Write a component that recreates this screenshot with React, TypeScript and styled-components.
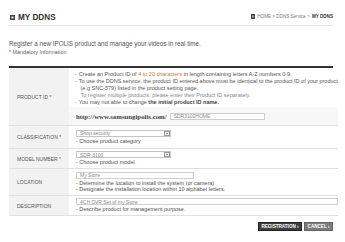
import React from "react";
import styled, { createGlobalStyle } from "styled-components";

const GlobalStyle = createGlobalStyle`
  html, body {
    margin: 0;
    padding: 0;
    background: #ffffff;
  }
  body {
    font-family: "Liberation Sans", Arial, sans-serif;
    color: #555;
  }
`;

const Page = styled.div`
  width: 345px;
  height: 242px;
  box-sizing: border-box;
  padding: 8px 12px 0 9px;
  overflow: hidden;
`;

const Header = styled.div`
  display: flex;
  justify-content: space-between;
  align-items: center;
  height: 17px;
  border-bottom: 1px solid #e6e6e6;
`;

const Title = styled.h1`
  display: flex;
  align-items: center;
  gap: 3px;
  margin: 0 0 0 1px;
  padding-top: 2px;
  font-size: 8.2px;
  font-weight: 700;
  color: #333;
`;

const SquareIcon = styled.span<{ $size: number }>`
  display: inline-block;
  box-sizing: border-box;
  width: ${({ $size }) => $size}px;
  height: ${({ $size }) => $size}px;
  background: #fff;
  border: ${({ $size }) => ($size > 4.6 ? 1.5 : 1)}px solid #444;
  box-shadow: inset 0 0 0 0.5px #444;
`;

const Crumbs = styled.div`
  display: flex;
  align-items: center;
  gap: 2px;
  font-size: 4.6px;
  color: #777;

  b {
    color: #333;
  }
`;

const Intro = styled.div`
  margin-top: 13px;
`;

const Lead = styled.p`
  margin: 0;
  font-size: 6.3px;
  line-height: 9px;
  color: #555;
`;

const Mandatory = styled.p`
  margin: 0;
  font-size: 5.4px;
  line-height: 8px;
  color: #666;
`;

const Table = styled.div`
  margin-top: 10px;
  border-top: 2px solid #333;
  display: grid;
  grid-template-columns: 60px 1fr;
`;

const Label = styled.div<{ $h: number }>`
  height: ${({ $h }) => $h}px;
  box-sizing: border-box;
  display: flex;
  align-items: center;
  padding-left: 8px;
  background: #f2f2f2;
  border-bottom: 1px solid #e0e0e0;
  font-size: 5px;
  color: #555;
`;

const Cell = styled.div<{ $h: number }>`
  height: ${({ $h }) => $h}px;
  box-sizing: border-box;
  display: flex;
  flex-direction: column;
  justify-content: center;
  gap: 1px;
  padding-left: 7px;
  border-bottom: 1px solid #e0e0e0;
`;

const ProductCell = styled.div`
  height: 58px;
  box-sizing: border-box;
  display: flex;
  flex-direction: column;
  border-bottom: 1px solid #e0e0e0;
`;

const Notes = styled.ul`
  margin: 0;
  padding: 3px 0 0 6px;
  list-style: none;
  font-size: 5.5px;
  line-height: 6.9px;
  color: #555;
  flex: 1;
`;

const Note = styled.li<{ $plain?: boolean; $muted?: boolean }>`
  white-space: nowrap;
  color: ${({ $muted }) => ($muted ? "#7a8794" : "#555")};
  padding-left: ${({ $plain }) => ($plain ? 3.5 : 0)}px;

  &::before {
    content: "${({ $plain }) => ($plain ? "" : "·")}";
    color: #e07a3a;
    font-weight: 700;
    margin-right: 2px;
  }

  em {
    font-style: normal;
    color: #d2783c;
  }

  b {
    color: #444;
  }
`;

const UrlRow = styled.div`
  height: 18px;
  display: flex;
  align-items: center;
  gap: 3px;
  padding-left: 7px;
  background: #f7f7f7;
`;

const Url = styled.span`
  font-family: "Liberation Serif", "Times New Roman", serif;
  font-weight: 700;
  font-size: 6.8px;
  color: #444;
`;

const TextBox = styled.div<{ $w?: number }>`
  box-sizing: border-box;
  height: 7px;
  width: ${({ $w }) => ($w ? `${$w}px` : "100%")};
  border: 1px solid #cfcfcf;
  background: #fff;
  display: flex;
  align-items: center;
  padding-left: 3px;
  font-size: 5px;
  color: #888;
`;

const SelectBox = styled.div`
  box-sizing: border-box;
  height: 7px;
  width: 95px;
  border: 1px solid #c4c4c4;
  background: #fff;
  display: flex;
  align-items: center;
  justify-content: space-between;
  padding-left: 3px;
  font-size: 5px;
  color: #888;
`;

const Arrow = styled.span`
  box-sizing: border-box;
  width: 6px;
  height: 5px;
  margin-right: 0.5px;
  border: 0.5px solid #999;
  background: #eee;
  display: flex;
  align-items: center;
  justify-content: center;

  &::after {
    content: "";
    border-left: 1.2px solid transparent;
    border-right: 1.2px solid transparent;
    border-top: 1.5px solid #333;
  }
`;

const Help = styled.div`
  font-size: 5.5px;
  line-height: 6.2px;
  color: #505050;
  white-space: nowrap;

  &::before {
    content: "·";
    font-weight: 700;
    margin-right: 1.5px;
    color: #555;
  }
`;

const Actions = styled.div`
  display: flex;
  justify-content: flex-end;
  gap: 2px;
  margin-top: 6px;
`;

const Button = styled.button<{ $dark?: boolean }>`
  appearance: none;
  border: 0.5px solid ${({ $dark }) => ($dark ? "#222" : "#666")};
  padding: 0;
  height: 8.5px;
  width: ${({ $dark }) => ($dark ? 44 : 29)}px;
  background: ${({ $dark }) => ($dark ? "#3f3f3f" : "#7b7b7b")};
  color: #fff;
  font-family: "Liberation Sans", Arial, sans-serif;
  font-size: 4.6px;
  font-weight: 700;
  display: flex;
  align-items: center;
  justify-content: center;
  gap: 1px;
  cursor: pointer;
`;

export default function App() {
  return (
    <>
      <GlobalStyle />
      <Page>
        <Header>
          <Title>
            <SquareIcon $size={5} />
            MY DDNS
          </Title>
          <Crumbs>
            <SquareIcon $size={4.5} />
            <span>HOME &gt; DDNS Service &gt;</span>
            <b>MY DDNS</b>
          </Crumbs>
        </Header>

        <Intro>
          <Lead>Register a new IPOLIS product and manage your videos in real time.</Lead>
          <Mandatory>* Mandatory Information</Mandatory>
        </Intro>

        <Table>
          <Label $h={58}>PRODUCT ID *</Label>
          <ProductCell>
            <Notes>
              <Note>
                Create an Product ID of <em>4 to 20 characters</em> in length containing letters A-Z numbers 0-9.
              </Note>
              <Note>
                To use the DDNS service, the product ID entered above must be identical to the product ID of your product
              </Note>
              <Note $plain>(e.g SNC-579) listed in the product setting page.</Note>
              <Note $plain $muted>
                To register multiple products, please enter their Product ID separately.
              </Note>
              <Note>
                You may not able to change <b>the initial product ID name.</b>
              </Note>
            </Notes>
            <UrlRow>
              <Url>http://www.samsungipolis.com/</Url>
              <TextBox $w={95}>SDR3100HOME</TextBox>
            </UrlRow>
          </ProductCell>

          <Label $h={23}>CLASSIFICATION *</Label>
          <Cell $h={23}>
            <SelectBox>
              Shop security
              <Arrow />
            </SelectBox>
            <Help>Choose product category</Help>
          </Cell>

          <Label $h={20}>MODEL NUMBER *</Label>
          <Cell $h={20}>
            <SelectBox>
              SDR-3100
              <Arrow />
            </SelectBox>
            <Help>Choose product model</Help>
          </Cell>

          <Label $h={27}>LOCATION</Label>
          <Cell $h={27}>
            <TextBox $w={118}>My Store</TextBox>
            <div>
              <Help>Determine the location to install the system (or camera)</Help>
              <Help>Designate the installation location within 10 alphabet letters.</Help>
            </div>
          </Cell>

          <Label $h={20}>DESCRIPTION</Label>
          <Cell $h={20}>
            <TextBox>4CH DVR Set of my Store</TextBox>
            <Help>Describe product for management purpose.</Help>
          </Cell>
        </Table>

        <Actions>
          <Button $dark>REGISTRATION ›</Button>
          <Button>CANCEL ›</Button>
        </Actions>
      </Page>
    </>
  );
}
